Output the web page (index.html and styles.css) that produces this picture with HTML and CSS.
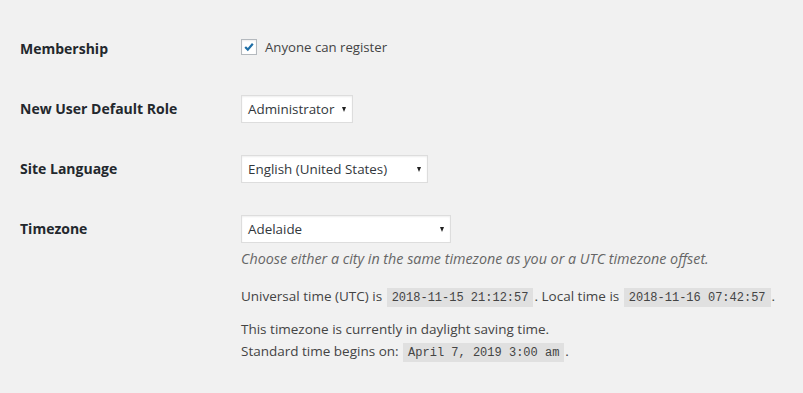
FILE: index.html
```html
<!DOCTYPE html>
<html>
<head>
<meta charset="utf-8">
<link rel="stylesheet" href="styles.css">
</head>
<body>
<div class="form-table">
  <div class="row">
    <div class="th">Membership</div>
    <div class="td">
      <label class="check">
        <span class="box"><svg width="16" height="16" viewBox="0 0 16 16"><path d="M4.2 8 L6.8 10.6 L11.8 4.8" fill="none" stroke="#1e6ea6" stroke-width="2.2" stroke-linejoin="miter"/></svg></span>
        Anyone can register
      </label>
    </div>
  </div>
  <div class="row">
    <div class="th">New User Default Role</div>
    <div class="td">
      <div class="select w-role"><span>Administrator</span><span class="arrow"></span></div>
    </div>
  </div>
  <div class="row">
    <div class="th">Site Language</div>
    <div class="td">
      <div class="select w-lang"><span>English (United States)</span><span class="arrow"></span></div>
    </div>
  </div>
  <div class="row">
    <div class="th">Timezone</div>
    <div class="td">
      <div class="select w-tz"><span>Adelaide</span><span class="arrow"></span></div>
      <p class="description">Choose either a city in the same timezone as you or a UTC timezone offset.</p>
      <p class="times">Universal time (<abbr>UTC</abbr>) is <code>2018-11-15 21:12:57</code>. Local time is <code>2018-11-16 07:42:57</code>.</p>
      <p class="dst">This timezone is currently in daylight saving time.<br>Standard time begins on: <code>April 7, 2019 3:00 am</code>.</p>
    </div>
  </div>
</div>
</body>
</html>
```
FILE: styles.css
```css
html, body {
  margin: 0;
  padding: 0;
  background: #f1f1f1;
}
body {
  font-family: "Open Sans", "Noto Sans", sans-serif;
  font-size: 13.5px;
  color: #444;
  line-height: 1.4;
}
.form-table {
  padding: 20px 0 0 20px;
}
.row {
  display: grid;
  grid-template-columns: 220px 1fr;
  min-height: 60px;
}
.th {
  padding-top: 20px;
  font-weight: 700;
  color: #23282d;
  font-size: 14px;
  line-height: 18px;
}
.td {
  padding-top: 15px;
  padding-left: 1px;
}
.check {
  display: flex;
  align-items: center;
  gap: 8px;
  margin-top: 4px;
  height: 16px;
  font-size: 13.2px;
}
.box {
  width: 14px;
  height: 14px;
  border: 1px solid #b4b9be;
  background: #fff;
  box-shadow: inset 0 1px 2px rgba(0,0,0,0.07);
  position: relative;
}
.box svg {
  position: absolute;
  left: -1px;
  top: -1px;
}
.select {
  box-sizing: border-box;
  height: 28px;
  background: #fff;
  border: 1px solid #ddd;
  box-shadow: inset 0 1px 2px rgba(0,0,0,0.07);
  display: flex;
  align-items: center;
  justify-content: space-between;
  padding: 0 6px 0 6px;
  color: #32373c;
  font-size: 13.4px;
}
.w-role { width: 112px; }
.w-lang { width: 187px; }
.w-tz { width: 210px; }
.arrow {
  width: 0;
  height: 0;
  margin-top: 1px;
  border-left: 2.5px solid transparent;
  border-right: 2.5px solid transparent;
  border-top: 5px solid #222;
}
p {
  margin: 0;
}
.description {
  margin-top: 6px;
  font-style: italic;
  color: #666;
  font-size: 14.3px;
  line-height: 20px;
}
.times {
  margin-top: 16px;
  line-height: 22px;
}
.dst {
  margin-top: 9px;
  line-height: 22px;
}
code {
  font-family: "Liberation Mono", "DejaVu Sans Mono", monospace;
  font-size: 12px;
  background: rgba(0,0,0,0.07);
  padding: 3px 5px 2px;
  margin: 0 1px;
  color: #444;
}
abbr { text-decoration: none; }
```
